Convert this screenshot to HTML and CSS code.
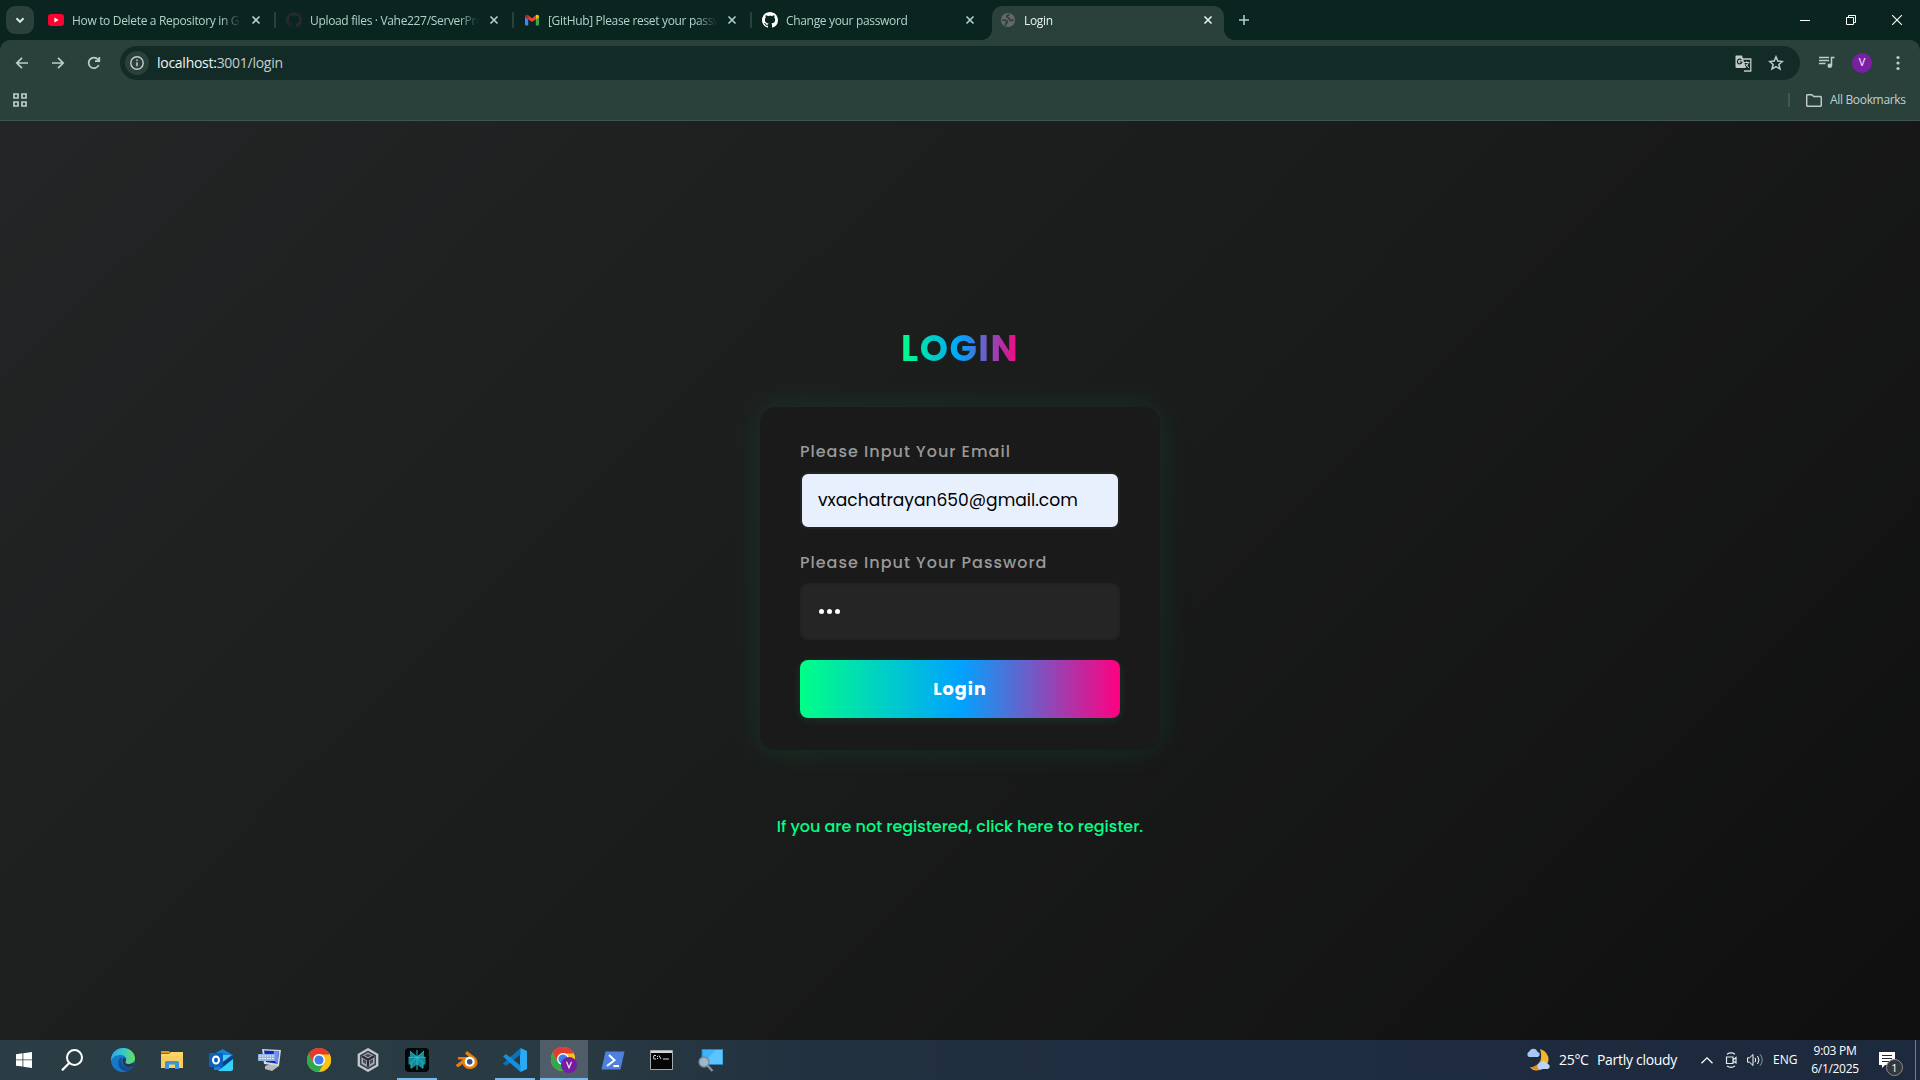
FILE: index.html
```html
<!DOCTYPE html>
<html lang="en">
<head>
<meta charset="utf-8">
<title>Login</title>
<link rel="stylesheet" href="styles.css">
</head>
<body>
<svg class="defs" width="0" height="0" aria-hidden="true">
  <symbol id="close" viewBox="0 0 16 16"><path d="M4.5 4.5l7 7M11.5 4.5l-7 7" fill="none" stroke="currentColor" stroke-width="1.6"/></symbol>
  <symbol id="github" viewBox="0 0 16 16"><path fill="currentColor" d="M8 0C3.58 0 0 3.58 0 8c0 3.54 2.29 6.53 5.47 7.59.4.07.55-.17.55-.38 0-.19-.01-.82-.01-1.49-2.01.37-2.53-.49-2.69-.94-.09-.23-.48-.94-.82-1.13-.28-.15-.68-.52-.01-.53.63-.01 1.08.58 1.23.82.72 1.21 1.87.87 2.33.66.07-.52.28-.87.51-1.07-1.78-.2-3.64-.89-3.64-3.95 0-.87.31-1.59.82-2.15-.08-.2-.36-1.02.08-2.12 0 0 .67-.21 2.2.82.64-.18 1.32-.27 2-.27s1.36.09 2 .27c1.53-1.04 2.2-.82 2.2-.82.44 1.1.16 1.92.08 2.12.51.56.82 1.27.82 2.15 0 3.07-1.87 3.75-3.65 3.95.29.25.54.73.54 1.48 0 1.07-.01 1.93-.01 2.2 0 .21.15.46.55.38A8.01 8.01 0 0 0 16 8c0-4.42-3.58-8-8-8z"/></symbol>
  <symbol id="chrome" viewBox="0 0 24 24">
    <circle cx="12" cy="12" r="12" fill="#fbc116"/>
    <path d="M12 12L1.6 6A12 12 0 0 1 22.4 6z" fill="#e33b2e"/>
    <path d="M1.6 6A12 12 0 0 0 12 24L17.2 15 12 12 6.8 15z" fill="#2da94f"/>
    <path d="M12 6h10.4a12 12 0 0 1 0 12L12 24l5.2-9z" fill="#fbc116"/>
    <path d="M1.6 6A12 12 0 0 1 22.4 6.6H12L6.8 15z" fill="#e33b2e"/>
    <circle cx="12" cy="12" r="6" fill="#fff"/><circle cx="12" cy="12" r="4.6" fill="#3b7ded"/>
  </symbol>
</svg>

<header class="browser">
  <div class="tabstrip">
    <button class="tab-search"><svg width="12" height="12" viewBox="0 0 12 12"><path d="M2.4 4.2L6 7.8l3.6-3.6" fill="none" stroke="currentColor" stroke-width="2"/></svg></button>
    <div class="tab">
      <svg class="fav" viewBox="0 0 16 16"><rect y="2" width="16" height="12" rx="3" fill="#f03"/><path d="M6.4 5.6v4.8L10.6 8z" fill="#fff"/></svg>
      <span class="title">How to Delete a Repository in GitHub</span><svg class="x"><use href="#close"/></svg>
    </div>
    <div class="tab divided">
      <svg class="fav dim"><use href="#github"/></svg>
      <span class="title">Upload files · Vahe227/ServerProject</span><svg class="x"><use href="#close"/></svg>
    </div>
    <div class="tab divided">
      <svg class="fav" viewBox="0 0 16 16"><path d="M1 4.5l3.2 2.3v6.6H2A1 1 0 0 1 1 12.400z" fill="#4285f4"/><path d="M15 4.500l-3.200 2.300v6.600H14a1 1 0 0 0 1-1z" fill="#34a853"/><path d="M4.200 3.200L8 6.200l3.800-3v4L8 10.100 4.200 7.200z" fill="#ea4335"/><path d="M11.800 3.200c1.400-1 3.200-.4 3.200 1.500v.5l-3.200 2.300z" fill="#fbbc04"/><path d="M4.200 3.200C2.800 2.200 1 2.800 1 4.700v.5l3.200 2.300z" fill="#c5221f"/></svg>
      <span class="title">[GitHub] Please reset your password</span><svg class="x"><use href="#close"/></svg>
    </div>
    <div class="tab divided">
      <svg class="fav white"><use href="#github"/></svg>
      <span class="title">Change your password</span><svg class="x"><use href="#close"/></svg>
    </div>
    <div class="tab active">
      <svg class="fav" viewBox="0 0 16 16"><circle cx="8" cy="8" r="7.100" fill="#65686b"/><path d="M2.200 8.300c2.800-.4 4.600-.2 5.200 1 .5 1-1 1.400-1.500 2.200-.3.700-.2 1.500-.4 2.300M9.300 2.300c-.8 1.200-2.600.9-2.600 2.200 0 1.200 1.800.8 2.300 1.700.6 1 .6 2.100 1.900 2.300 1 .1 1.800-.5 3-.6" fill="none" stroke="#29403b" stroke-width="1.700"/></svg>
      <span class="title">Login</span><svg class="x"><use href="#close"/></svg>
    </div>
    <button class="new-tab"><svg width="12" height="12" viewBox="0 0 12 12"><path d="M6 1v10M1 6h10" stroke="currentColor" stroke-width="1.500"/></svg></button>
    <div class="window-buttons">
      <svg width="10" height="10"><path d="M0 5.500h10" stroke="#fff"/></svg>
      <svg width="10" height="10"><path d="M.5 2.500h7v7h-7zM2.500 2.500v-2h7v7h-2" fill="none" stroke="#fff"/></svg>
      <svg width="10" height="10"><path d="M0 0l10 10M10 0L0 10" stroke="#fff" stroke-width="1.100"/></svg>
    </div>
  </div>

  <div class="toolbar">
    <svg class="nav" viewBox="0 0 16 16"><path d="M14 8H3M8 2.800L2.800 8 8 13.200"/></svg>
    <svg class="nav" viewBox="0 0 16 16"><path d="M2 8h11M8 2.800L13.200 8 8 13.200"/></svg>
    <svg class="nav" viewBox="0 0 16 16"><path d="M12.800 10A5.300 5.300 0 1 1 12 4.500L13.300 6M13.300 2v4.200H9"/></svg>
    <div class="omnibox">
      <span class="site-info"><svg width="14" height="14" viewBox="0 0 14 14"><circle cx="7" cy="7" r="6.200" fill="none" stroke="currentColor" stroke-width="1.400"/><path d="M7 6.300v4M7 3.500v1.500" stroke="currentColor" stroke-width="1.500"/></svg></span>
      <span class="url"><b>localhost:</b>3001/login</span>
      <svg class="translate" width="17" height="17" viewBox="0 0 17 17"><path d="M8 4h7.800v12H9" fill="none" stroke="#c0cbc8" stroke-width="1.300"/><path d="M1 .5h6L11 13H1.500A1 1 0 0 1 .5 12V1z" fill="#c0cbc8"/><path d="M6.400 5A2.300 2.300 0 1 0 6.900 7H4.800" fill="none" stroke="#122b27" stroke-width="1.200"/><path d="M9 7.500h5.500M11.700 6.300v1.200M13.300 7.500c-.4 2-1.500 3.300-3 4.500M10.800 9l3 4" fill="none" stroke="#c0cbc8"/></svg>
      <svg class="star" width="16" height="16" viewBox="0 0 16 16"><path d="M8 1.800l1.800 4.300 4.600.4-3.500 3 1.100 4.500L8 11.600 4 14l1.100-4.500-3.500-3 4.600-.4z" fill="none" stroke="#c0cbc8" stroke-width="1.500"/></svg>
    </div>
    <svg class="media" width="16" height="13" viewBox="0 0 16 13"><path d="M0 1.500h10M0 4.500h10M0 7.500h6.500M12.500 10V1.500H15.500" fill="none" stroke="#b3d4cb" stroke-width="1.500"/><circle cx="10.800" cy="9.800" r="2.300" fill="#b3d4cb"/></svg>
    <span class="avatar">V</span>
    <svg class="menu" width="4" height="16"><circle cx="2" cy="2.500" r="1.600"/><circle cx="2" cy="8" r="1.600"/><circle cx="2" cy="13.500" r="1.600"/></svg>
  </div>

  <div class="bookmarks">
    <svg width="14" height="14" viewBox="0 0 14 14"><path d="M1 1h4v4H1zM9 1h4v4H9zM1 9h4v4H1zM9 9h4v4H9z" fill="none" stroke="#c0cbc8" stroke-width="1.700"/></svg>
    <span class="all">
      <svg width="16" height="13" viewBox="0 0 16 13"><path d="M1.700.8h4.200l1.800 1.700h6.600q1 0 1 1v7.700q0 1-1 1H1.700q-1 0-1-1V1.800q0-1 1-1z" fill="none" stroke="#c0cbc8" stroke-width="1.500"/></svg>
      <span class="all-text">All Bookmarks</span>
    </span>
  </div>
</header>

<main class="page">
  <h1 class="heading">LOGIN</h1>
  <form class="card">
    <label class="label" for="email">Please Input Your Email</label>
    <div class="field autofill" id="email"><span class="value">vxachatrayan650@gmail.com</span></div>
    <label class="label second" for="password">Please Input Your Password</label>
    <div class="field password" id="password"><i class="dot"></i><i class="dot"></i><i class="dot"></i></div>
    <button class="submit" type="button">Login</button>
  </form>
  <a class="register">If you are not registered, click here to register.</a>
</main>

<footer class="taskbar">
  <div class="slot"><svg width="16" height="16" viewBox="0 0 16 16"><path d="M0 2.200l6.500-.9v6.200H0zM7.300 1.200L16 0v7.500H7.300zM0 8.300h6.500v6.300L0 13.700zM7.300 8.300H16V16l-8.700-1.200z" fill="#fff"/></svg></div>
  <div class="slot search"><svg width="22" height="22" viewBox="0 0 22 22"><circle cx="13.500" cy="8.500" r="7.500" fill="none" stroke="#fff" stroke-width="2"/><path d="M8.300 14L1 21.300" stroke="#fff" stroke-width="2.200"/></svg></div>
  <div class="apps">
    <div class="slot"><svg width="24" height="24" viewBox="0 0 24 24"><defs><linearGradient id="e1"><stop offset="0" stop-color="#28a8e0"/><stop offset=".5" stop-color="#37c6d0"/><stop offset="1" stop-color="#6ddf54"/></linearGradient></defs><circle cx="12" cy="12" r="12" fill="#1479c9"/><path d="M0 11C1 4 6 0 12 0c7 0 12 5 12 10.500 0 3.500-3 5.500-6 5.500-4 0-4-1.800-3.300-3 1.800-3-1-6-4.700-6C5 7 1.500 9 0 13z" fill="url(#e1)"/><path d="M11 9c-6 2-5 13 4 14.500 3-.5 6-3 7.500-5.500-6 3-12 .5-12-5 0-2 .3-3 .5-4z" fill="#124f94"/><path d="M14.700 13c-.7 1.200-.7 3 3.300 3 2 0 4-1 5-2.500l-.5 4.500c-5 2.500-11 .5-11-5 0-1.500.5-3 1.500-3.500 1.800.5 2.500 2 1.700 3.500z" fill="#28384a"/></svg></div>
    <div class="slot"><svg width="22" height="20" viewBox="0 0 22 20"><path d="M0 1h8l2 2.500H0z" fill="#e39a0b"/><path d="M0 4h8l2-2h12v16H0z" fill="#fdd66a"/><path d="M0 6h22v12H0z" fill="#f8cf5e"/><path d="M4 19v-6.500q0-1.500 1.500-1.500h11q1.500 0 1.500 1.500V19h-4v-4.500H8V19z" fill="#3a96dc"/></svg></div>
    <div class="slot"><svg width="24" height="24" viewBox="0 0 24 24"><path d="M5 6l8.500-5L24 7v15H5z" fill="#1682d4"/><path d="M13 7h9l-8 7z" fill="#50c8f5"/><path d="M24 7v5L12 21l-1-5z" fill="#0a3f86"/><path d="M24 11v10q0 2-2 2H9z" fill="#35d1f7"/><rect y="5" width="14" height="14" rx="1" fill="#0b62bd"/><ellipse cx="7" cy="12" rx="3" ry="3.600" fill="none" stroke="#fff" stroke-width="2"/></svg></div>
    <div class="slot"><svg width="24" height="24" viewBox="0 0 24 24"><path d="M7 18l9-3 5 3-7 5-7-2z" fill="#b9bab8"/><path d="M4 1l19 1-2 16-15-2z" fill="#d5d7d3"/><path d="M6 2.500l15 .8-1.500 12.500L8 14z" fill="#1524c3"/><path d="M16 3l5 .3-1.500 12.500-5-5z" fill="#6b8ffc"/><rect y="6" width="17" height="7" fill="#8db2df"/><path d="M1.500 8h14M1.500 10.500h14" stroke="#fff" stroke-width="1.200" stroke-dasharray="1.500 1"/></svg></div>
    <div class="slot"><svg width="24" height="24"><use href="#chrome"/></svg></div>
    <div class="slot"><svg width="22" height="24" viewBox="0 0 22 24"><path d="M11 1.300L20.200 6.600v10.800L11 22.700 1.800 17.400V6.600z" fill="#3b4450" stroke="#c4c8cf" stroke-width="2.300"/><path d="M11 4.500l6.500 3.700v7.600L11 19.500l-6.500-3.700V8.200z" fill="#a8adb6"/><path d="M11 11.700v7M11 11.700L5 8.300M11 11.700l6-3.400" stroke="#252c35" stroke-width="2.300"/><path d="M7.500 7.500L11 9.300l3.500-1.800L11 5.800zM6 11l3 1.700v3.500l-3-1.700zM16 11l-3 1.700v3.500l3-1.700z" fill="#454c58"/></svg></div>
    <div class="slot running"><svg width="24" height="24" viewBox="0 0 24 24"><rect width="24" height="24" rx="4" fill="#020708"/><path d="M12 8.500L5 3v6H3.500v7.500H6V21l6-4.500 6 4.500v-4.500h2.500V9H19V3z" fill="#168a99"/><path d="M12 2v20M5 3l7 6.500L19 3M6 20v-5l6-5.500 6 5.500v5M3.500 9.300h17" fill="none" stroke="#27bcc9"/></svg></div>
    <div class="slot"><svg width="23" height="20" viewBox="0 0 23 20"><path d="M12 1l8.500 6.500c4 5 1.500 10.500-4 11.500-4.500.7-8-2-8.700-5L3 17.200l-2.500-2L8 9.500H3V7h11l-4-3.600z" fill="#e87d0d"/><circle cx="14.700" cy="11.800" r="5" fill="#fff"/><circle cx="14.700" cy="11.800" r="2.800" fill="#265787"/></svg></div>
    <div class="slot running"><svg width="24" height="24" viewBox="0 0 24 24"><path d="M17.500 0L24 3v18l-6.500 3-.5-1V1z" fill="#2aaaf2"/><path d="M17.500 0v6.500L3 18 0 15.500z" fill="#0873ba"/><path d="M17.500 24v-6.500L3 6 0 8.500z" fill="#168ed8"/></svg></div>
    <div class="slot running current"><svg width="26" height="26" viewBox="0 0 26 26"><svg width="24" height="24"><use href="#chrome"/></svg><circle cx="18" cy="18" r="8" fill="#771ba2"/><path d="M15.500 14.800l2.500 6 2.500-6" fill="none" stroke="#e9d5f0" stroke-width="1.300"/></svg></div>
    <div class="slot"><svg width="24" height="19" viewBox="0 0 24 19"><path d="M4.500.5H23.500L19.500 18.500H.5z" fill="#4f80dc"/><path d="M8 4l5.500 5.200L6 15M12.500 15H18" fill="none" stroke="#fff" stroke-width="2"/></svg></div>
    <div class="slot"><svg class="nudge" width="23" height="20" viewBox="0 0 23 20"><path d="M.5.500h22v19H.5z" fill="#050505" stroke="#a4a9ac"/><path d="M1 1h21v2H1z" fill="#d5d8da"/><path d="M6 5.500H4q-1 1.700 0 3.500h2M7.500 6v1M7.500 8v1M9 5.500l2 3.500M13 9h6" fill="none" stroke="#ddd"/></svg></div>
    <div class="slot"><svg class="nudge" width="25" height="23" viewBox="0 0 25 23"><path d="M4 .5h21v15H4z" fill="#3fb2f8"/><path d="M4 15.500L18 .5h7v15z" fill="#5cc5ff"/><path d="M4 .5h21v15H4z" fill="none" stroke="#2b86c0"/><circle cx="6" cy="13" r="5" fill="#9cb8c9" stroke="#758994" stroke-width="1.300"/><path d="M9.500 16.500l5 5.500" stroke="#8c9398" stroke-width="2.300"/></svg></div>
  </div>
  <div class="tray">
    <svg class="weather" width="25" height="24" viewBox="0 0 25 24"><path d="M14 1q9 3 8.500 11.500Q21 22 10.500 22.500 6 22 4 19.500 12 18.500 14.500 12.500 16 7 14 1z" fill="#f3b62a"/><path d="M4 19.500q8-1 10.500-7l2 8q-6 3-12.500-1z" fill="#e78a19"/><path d="M3 9a3 3 0 0 1 .3-5.500 4.200 4.200 0 0 1 8 .3A2.700 2.700 0 0 1 12 9z" fill="#a9c7f5"/><path d="M13 21a3 3 0 0 1 .3-5.500 4.300 4.300 0 0 1 8 .3 2.700 2.700 0 0 1 .7 5.200z" fill="#bcd3fa"/></svg>
    <span class="temp">25°C</span><span class="sky">Partly cloudy</span>
    <svg class="chev" width="12" height="7"><path d="M.5 6.200L6 .9l5.500 5.300" fill="none" stroke="#fff" stroke-width="1.300"/></svg>
    <svg class="meet" width="12" height="16" viewBox="0 0 12 16"><path d="M1.500 5h6.500v6.500H1.500zM8 8l3-2.500v5.500L8 9M2 2.200Q6-.5 10 2.200M2 14q4 2.700 8 0" fill="none" stroke="#e5e8ec" stroke-width="1.200"/></svg>
    <svg class="sound" width="17" height="14" viewBox="0 0 17 14"><path d="M.6 4.800h2L6 1.500v11L2.600 9.200h-2z" fill="none" stroke="#fff"/><path d="M8 4.800q1.500 2.200 0 4.400M10.500 3q3 4 0 8" fill="none" stroke="#fff"/><path d="M13 1.200q4.500 5.800 0 11.600" fill="none" stroke="#8993a1"/></svg>
    <span class="lang">ENG</span>
    <span class="clock"><span>9:03 PM</span><span>6/1/2025</span></span>
    <span class="notes"><svg width="16" height="16" viewBox="0 0 16 16"><path d="M0 0h16v13H6l-3 3v-3H0z" fill="#fff"/><path d="M3 3.500h10M3 6.500h10M3 9.500h7" stroke="#1e2b3e"/></svg><span class="count">1</span></span>
    <span class="peek"></span>
  </div>
</footer>
</body>
</html>
```
FILE: styles.css
```css
* { box-sizing: border-box; }
body {
  margin: 0;
  width: 1920px;
  height: 1080px;
  overflow: hidden;
  display: flex;
  flex-direction: column;
  background: #171717;
  font-family: "Segoe UI", "Open Sans", "Noto Sans", sans-serif;
}
button { border: 0; padding: 0; margin: 0; font: inherit; color: inherit; }
svg { display: block; flex: none; }
.defs { position: absolute; }

/* browser chrome */
.browser { height: 121px; flex: none; background: #0a2420; border-bottom: 1px solid #41544f; }
.tabstrip { height: 40px; display: flex; align-items: flex-start; color: #b4d2ca; }
.tab-search {
  width: 28px; height: 28px; margin: 6px 6px 0; border-radius: 9px;
  background: #29403b; color: #d5e5e0; display: grid; place-items: center;
}
.tab {
  width: 238px; height: 28px; margin-top: 6px; padding: 0 14px 0 8px;
  display: flex; align-items: center; position: relative;
}
.tab.divided::before {
  content: ""; position: absolute; left: -4px; top: 6px; width: 2px; height: 16px; background: #29403b;
}
.tab.active {
  width: 232px; height: 34px; padding: 0 8px 6px;
  background: #29403b; border-radius: 10px 10px 0 0; color: #e8f2ef; z-index: 1;
}
.tab.active::before, .tab.active::after {
  content: ""; position: absolute; bottom: 0; width: 10px; height: 10px;
}
.tab.active::before { left: -10px; background: radial-gradient(circle at 0 0, transparent 9.5px, #29403b 10px); }
.tab.active::after { right: -10px; background: radial-gradient(circle at 100% 0, transparent 9.5px, #29403b 10px); }
.fav { width: 16px; height: 16px; margin-right: 8px; }
.dim { color: #26292d; }
.white { color: #fff; }
.title {
  flex: 1; font-size: 12px; line-height: 20px; padding-top: 1px; white-space: nowrap; overflow: hidden; letter-spacing: -0.33px;
  mask-image: linear-gradient(90deg, #000 88%, transparent);
}
.tab .x { width: 16px; height: 16px; margin-left: 7px; }
.new-tab { width: 28px; height: 28px; margin: 6px 0 0 6px; background: none; display: grid; place-items: center; }
.window-buttons { margin-left: auto; height: 40px; display: flex; align-items: center; gap: 36px; padding-right: 18px; }

.toolbar {
  height: 46px; padding-top: 6px; display: flex; background: #29403b; align-items: flex-start;
  border-radius: 10px 10px 0 0;
}
.nav { width: 16px; height: 16px; margin: 9px 20px 0 0; fill: none; stroke: #b4d2ca; stroke-width: 1.7; }
.nav:first-child { margin-left: 14px; }
.nav:nth-child(3) { margin-right: 18px; }
.omnibox {
  width: 1680px; height: 34px; border-radius: 17px; background: #122b27;
  display: flex; align-items: center; padding: 0 16px 0 5px; color: #c5ceca;
}
.site-info { width: 24px; height: 24px; border-radius: 50%; background: #29403b; display: grid; place-items: center; }
.url { margin-left: 8px; font-size: 14px; letter-spacing: -0.27px; flex: 1; line-height: 20px; }
.url b { font-weight: 400; color: #f0f5f3; }
.star { margin-left: 16px; }
.media { margin: 10px 0 0 19px; }
.avatar {
  width: 20px; height: 20px; border-radius: 50%; background: #7b1fa2; color: #f3e4f8; font: 11px/20px Roboto, sans-serif;
  text-align: center; margin: 7px 0 0 17px;
}
.menu { margin: 9px 0 0 24px; fill: #b4d2ca; }
.bookmarks {
  height: 34px; background: #29403b; display: flex; align-items: flex-start; justify-content: space-between;
  padding: 7px 14px 0 13px;
}
.all { display: flex; align-items: center; height: 14px; padding-left: 16px; border-left: 2px solid #41564f; }
.all-text { margin-left: 8px; width: 76px; font-size: 12px; line-height: 14px; padding-bottom: 1px; letter-spacing: -0.33px; color: #c5d0cc; white-space: nowrap; }

/* login page */
.page {
  flex: 1; display: flex; flex-direction: column; align-items: center;
  background: linear-gradient(135deg, #232526 0%, #1a1c1b 50%, #0f0f0f 100%);
  font-family: Poppins, Inter, "Open Sans", sans-serif;
}
.heading {
  margin: 201px 0 0; height: 54px; line-height: 54px; font-size: 36px; font-weight: 700; letter-spacing: 1.5px;
  background: linear-gradient(90deg, #00ff87, #00a3ff 50%, #ff007f); background-clip: text; color: transparent;
}
.card {
  width: 400px; height: 343px; margin-top: 31px; padding: 33px 40px 32px; border-radius: 16px; background: #1a1a1a;
  box-shadow: 0 0 32px rgba(0, 255, 135, .1); display: flex; flex-direction: column;
}
.label { height: 24px; margin-bottom: 8px; font-size: 16px; line-height: 24px; font-weight: 500; letter-spacing: 1px; color: #999; white-space: nowrap; }
.label.second { margin-top: 22px; }
.field {
  height: 57px; border: 2px solid #222; border-radius: 8px; background: #252525;
  display: flex; align-items: center; gap: 3px; padding: 0 16px; font-size: 17.1px; color: #fff; flex: none;
}
.autofill { background: #e8f0fe; color: #000; }
.value { line-height: 26px; padding-bottom: 1px; }
.field.password { padding-left: 17px; }
.dot { width: 5px; height: 5px; border-radius: 50%; background: #fff; }
.submit {
  height: 58px; flex: none; margin-top: 20px; border-radius: 8px; color: #fff; font-size: 17.6px; font-weight: 700; letter-spacing: 1px;
  background: linear-gradient(90deg, #00ff87, #00a3ff 50%, #ff007f); box-shadow: 0 2px 8px rgba(0, 255, 135, .12);
}
.register { margin-top: 65px; line-height: 24px; font-size: 16px; font-weight: 500; color: #00ff87; white-space: nowrap; }

/* taskbar */
.taskbar {
  height: 40px; flex: none; display: flex; color: #fff;
  background: linear-gradient(90deg, #2b3d44 0, #293a43 30%, #22313f 42%, #1f2d42 62%, #1d293c 100%);
}
.slot { width: 48px; height: 40px; display: grid; place-items: center; flex: none; }
.apps { display: flex; gap: 1px; margin-left: 3px; }
.nudge { margin-right: 2px; }
.running { background: linear-gradient(#76b9ed, #76b9ed) center bottom / 40px 2px no-repeat; }
.running.current { background: linear-gradient(#76b9ed, #76b9ed) center bottom / 48px 2px no-repeat, #505d68; }
.tray { margin-left: auto; display: flex; align-items: center; height: 40px; white-space: nowrap; }
.temp { margin-left: 8px; width: 29px; font-size: 14px; letter-spacing: -.3px; padding-bottom: 1px; }
.sky { margin-left: 9px; width: 80px; font-size: 14px; letter-spacing: -.3px; padding-bottom: 1px; }
.chev { margin-left: 24px; }
.meet { margin-left: 12px; }
.sound { margin-left: 10px; }
.lang { margin-left: 9px; width: 23px; font-size: 12px; padding-bottom: 1px; }
.clock { margin-left: 16px; width: 46px; display: flex; flex-direction: column; align-items: center; font-size: 12px; line-height: 18px; letter-spacing: -.3px; }
.notes { position: relative; margin: 0 0 0 21px; padding-right: 20px; }
.count {
  position: absolute; left: 7px; top: 7px; width: 17px; height: 17px; border-radius: 50%; border: 1px solid #8b8f94;
  background: #33373b; font-size: 11px; line-height: 15px; text-align: center;
}
.peek { width: 1px; height: 40px; background: #737d89; margin-right: 4px; }
```
